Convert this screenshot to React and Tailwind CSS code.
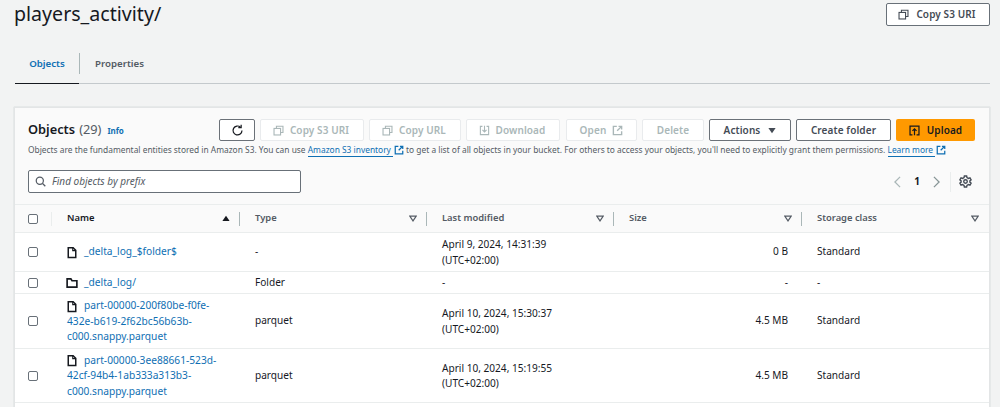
import React from "react";

function CopyIcon({ className = "" }) {
  return (
    <svg viewBox="0 0 16 16" className={"shrink-0 " + className} fill="none" stroke="currentColor" strokeWidth="1.6">
      <rect x="1.5" y="5" width="9.5" height="9.5" />
      <path d="M5 5V1.8h9.5v9.2H11" />
    </svg>
  );
}
function ExtIcon({ className = "" }) {
  return (
    <svg viewBox="0 0 16 16" className={"shrink-0 " + className} fill="none" stroke="currentColor" strokeWidth="2">
      <path d="M7 2H2v12h12V9" />
      <path d="M9.5 2H14v4.5M14 2 7.5 8.5" />
    </svg>
  );
}
function FileIcon() {
  return (
    <svg viewBox="0 0 16 16" className="w-[12px] h-[13px] shrink-0 -ml-[1px] mr-[1px] text-[#16191f]" fill="none" stroke="currentColor" strokeWidth="2">
      <path d="M3 1.5h6.5l3.5 3.5v9.5H3z" />
      <path d="M9 1.5v4h4" strokeWidth="1.5" />
    </svg>
  );
}
function FolderIcon() {
  return (
    <svg viewBox="0 0 16 16" className="w-[12px] h-[12px] shrink-0 -ml-[1px] mr-[1px] text-[#16191f]" fill="none" stroke="currentColor" strokeWidth="2.2">
      <path d="M1.5 2.5h5l1.5 2.5h6.5v8.5h-13z" />
    </svg>
  );
}
function SortDown() {
  return (
    <svg viewBox="0 0 10 8" className="w-[8px] h-[7px] shrink-0 text-[#545b64]" fill="none" stroke="currentColor" strokeWidth="1.4">
      <path d="M1 1h8L5 7z" />
    </svg>
  );
}
function Check() {
  return <span className="block w-[10px] h-[10px] rounded-[2px] border border-[#687078] bg-white" />;
}
function ToolBtn({ children, disabled, className = "" }) {
  return (
    <div
      className={
        "h-[22px] flex items-center justify-center gap-[6px] rounded-[2px] text-[10px] font-semibold tracking-[0.1px] border " +
        (disabled ? "border-[#e9ebed] bg-white text-[#aab7b8] " : "border-[#6b7178] bg-white text-[#444b55] ") +
        className
      }
    >
      {children}
    </div>
  );
}

const cols = "grid grid-cols-[37px_188px_187px_187px_188px_1fr]";

function Row({ h, name, icon, wrapped, type, date, tz, size, cls }) {
  return (
    <div className={cols + " border-b border-[#eaeded] items-center text-[10.1px] leading-[15.5px] text-[#16191f] bg-white " + h}>
      <div className="pl-[13px]"><Check /></div>
      <div className={"pl-[15px] pr-[12px] text-[10.2px] text-[#0f6fb3] " + (wrapped ? "pt-[1px]" : "")}>
        {wrapped ? (
          <>
            <div className="flex items-center gap-[5px] h-[15.5px]">{icon}<span className="whitespace-nowrap">{name[0]}</span></div>
            <div className="whitespace-nowrap">{name[1]}</div>
            <div className="whitespace-nowrap">{name[2]}</div>
          </>
        ) : (
          <div className="flex items-center gap-[5px]">{icon}<span>{name[0]}</span></div>
        )}
      </div>
      <div className="pl-[15px]">{type}</div>
      <div className={"pl-[15px] " + (tz ? "pt-[1px]" : "")}>
        <div>{date}</div>
        {tz && <div>(UTC+02:00)</div>}
      </div>
      <div className="pr-[14px] text-right">{size}</div>
      <div className="pl-[15px]">{cls}</div>
    </div>
  );
}

function Head({ label, sep = true, children }) {
  return (
    <div className="relative h-full flex items-center justify-between pl-[15px] pr-[10px] font-semibold text-[#545b64]">
      <span>{label}</span>
      {children || <SortDown />}
      {sep && <span className="absolute right-0 top-[7px] h-[14px] w-[1px] bg-[#aab7b8]" />}
    </div>
  );
}

export default function App() {
  return (
    <div className="w-[1000px] h-[407px] overflow-hidden bg-[#f2f3f3] font-['Noto_Sans','Open_Sans',sans-serif]">
      <div className="flex items-start justify-between pl-[14px] pr-[10px] pt-[3px] h-[49px]">
        <div className="text-[19.6px] leading-[22px] text-[#16191f]">players_activity/</div>
        <div className="w-[104px] h-[23px] flex items-center justify-center gap-[7px] pr-[2px] bg-white border border-[#687078] rounded-[2px] text-[10px] font-semibold tracking-[0.1px] text-[#444b55]">
          <CopyIcon className="w-[11px] h-[11px] text-[#444b55]" />
          Copy S3 URI
        </div>
      </div>

      <div className="ml-[15px] mr-[10px] h-[35px] pb-[3px] flex items-center border-b border-[#c4c9cc] relative">
        <div className="w-[64px] h-full relative flex items-center justify-center text-[9.7px] font-semibold text-[#0f6fb3]">
          Objects
          <span className="absolute left-0 right-0 bottom-[-4px] h-[1px] bg-[#16191f]" />
        </div>
        <div className="w-[1px] h-[21px] mb-[3px] bg-[#aab7b8]" />
        <div className="ml-[15px] text-[9.7px] font-semibold text-[#545b64]">Properties</div>
      </div>

      <div className="ml-[14px] mr-[10px] mt-[23px] border-l border-r border-t border-[#e3e5e6] bg-[#fafafa] h-[400px] shadow-[0_0_1px_#aab7b8]">
        <div className="h-[96px] relative pl-[13px] pr-[14px] pt-[11px]">
          <div className="flex items-center h-[22px]">
            <div className="text-[12.8px] font-semibold text-[#16191f] leading-[20px] mb-[2px]">Objects</div>
            <div className="ml-[4px] text-[12.8px] text-[#545b64] leading-[20px] mb-[2px]">(29)</div>
            <div className="ml-[6px] mt-[2px] text-[8px] font-bold text-[#0f6fb3]">Info</div>
            <div className="ml-auto flex gap-[5px]">
              <ToolBtn className="w-[36px]">
                <svg viewBox="0 0 16 16" className="w-[13px] h-[13px] text-[#16191f]" fill="none" stroke="currentColor" strokeWidth="1.5">
                  <path d="M13.5 8a5.5 5.5 0 1 1-1.8-4.1" />
                  <path d="M12.5 0.8v3.6H9" />
                </svg>
              </ToolBtn>
              <ToolBtn disabled className="w-[104px] pr-[2px]"><CopyIcon className="w-[11px] h-[11px]" />Copy S3 URI</ToolBtn>
              <ToolBtn disabled className="w-[92px] pr-[2px]"><CopyIcon className="w-[11px] h-[11px]" />Copy URL</ToolBtn>
              <ToolBtn disabled className="w-[94px] pr-[2px]">
                <svg viewBox="0 0 16 16" className="w-[11px] h-[11px]" fill="none" stroke="currentColor" strokeWidth="1.6">
                  <path d="M5 2H2v12h12V2h-3M8 1v9M5 7l3 3 3-3" />
                </svg>
                Download
              </ToolBtn>
              <ToolBtn disabled className="w-[71px] ml-[1px]">Open<ExtIcon className="w-[11px] h-[11px]" /></ToolBtn>
              <ToolBtn disabled className="w-[62px]">Delete</ToolBtn>
              <ToolBtn className="w-[82px] gap-[8px]">
                Actions
                <svg viewBox="0 0 10 8" className="w-[8px] h-[7px] text-[#444b55]" fill="currentColor"><path d="M0.5 1h9L5 7.5z" /></svg>
              </ToolBtn>
              <ToolBtn className="w-[95px]">Create folder</ToolBtn>
              <div className="w-[79px] h-[22px] flex items-center justify-center gap-[7px] bg-[#ff9900] rounded-[2px] text-[10px] font-semibold tracking-[0.1px] text-[#16191f]">
                <svg viewBox="0 0 16 16" className="w-[11px] h-[11px]" fill="none" stroke="currentColor" strokeWidth="1.8">
                  <path d="M5 14.5H1.5v-13h13v13H11M8 15V6M5 8.5l3-3 3 3" />
                </svg>
                Upload
              </div>
            </div>
          </div>
          <div className="mt-[2px] text-[8.4px] leading-[14px] text-[#545b64] whitespace-nowrap flex items-center">
            Objects are the fundamental entities stored in Amazon S3. You can use&nbsp;
            <span className="text-[#0f6fb3] border-b border-[#0f6fb3] leading-[12px] pr-[2px]">Amazon S3 inventory</span>
            <ExtIcon className="w-[10px] h-[10px] text-[#0f6fb3] ml-[1px]" />
            &nbsp;to get a list of all objects in your bucket. For others to access your objects, you'll need to explicitly grant them permissions.&nbsp;
            <span className="text-[#0f6fb3] border-b border-[#0f6fb3] leading-[12px] pr-[2px]">Learn more</span>
            <ExtIcon className="w-[10px] h-[10px] text-[#0f6fb3] ml-[1px]" />
          </div>
          <div className="mt-[13px] flex items-center">
            <div className="w-[273px] h-[23px] bg-white border border-[#687078] rounded-[2px] flex items-center pl-[6px] gap-[6px]">
              <svg viewBox="0 0 16 16" className="w-[11px] h-[11px] text-[#545b64]" fill="none" stroke="currentColor" strokeWidth="1.8">
                <circle cx="7" cy="7" r="5.2" />
                <path d="M11 11l4 4" />
              </svg>
              <span className="text-[10px] italic text-[#545b64]">Find objects by prefix</span>
            </div>
            <div className="ml-auto flex items-center h-[23px] pr-[3px] text-[#16191f]">
              <svg viewBox="0 0 8 14" className="w-[7px] h-[12px] text-[#aab7b8]" fill="none" stroke="currentColor" strokeWidth="1.5"><path d="M7 1 1 7l6 6" /></svg>
              <span className="mx-[13px] text-[10px] font-bold">1</span>
              <svg viewBox="0 0 8 14" className="w-[7px] h-[12px] text-[#879596]" fill="none" stroke="currentColor" strokeWidth="1.5"><path d="M1 1l6 6-6 6" /></svg>
              <span className="ml-[10px] w-[1px] h-[20px] bg-[#eaeded]" />
              <svg viewBox="0 0 16 16" className="ml-[8px] w-[13px] h-[13px] text-[#444b55]" fill="none" stroke="currentColor" strokeWidth="1.7">
                <circle cx="8" cy="8" r="2.2" />
                <path d="M6.6 1.2h2.8l.4 2 1.8 1 1.9-.7 1.4 2.5-1.5 1.3v1.4l1.5 1.3-1.4 2.5-1.9-.7-1.8 1-.4 2H6.6l-.4-2-1.8-1-1.9.7-1.4-2.5L2.6 8.7V7.3L1.1 6l1.4-2.5 1.9.7 1.8-1z" />
              </svg>
            </div>
          </div>
        </div>

        <div className={cols + " h-[29px] border-t border-b border-[#eaeded] items-center text-[9.4px] bg-[#fafafa]"}>
          <div className="relative h-full flex items-center pl-[13px]">
            <Check />
            <span className="absolute right-0 top-[7px] h-[14px] w-[1px] bg-[#eaeded]" />
          </div>
          <Head label={<span className="text-[#16191f]">Name</span>}>
            <svg viewBox="0 0 10 8" className="w-[8px] h-[7px] text-[#16191f]" fill="currentColor"><path d="M5 .5 9.5 7H.5z" /></svg>
          </Head>
          <Head label="Type" />
          <Head label="Last modified" />
          <Head label="Size" />
          <Head label="Storage class" sep={false} />
        </div>

        <Row h="h-[39px]" icon={<FileIcon />} name={["_delta_log_$folder$"]} type="-" date="April 9, 2024, 14:31:39" tz size="0 B" cls="Standard" />
        <Row h="h-[22px]" icon={<FolderIcon />} name={["_delta_log/"]} type="Folder" date="-" size="-" cls="-" />
        <Row h="h-[55px]" wrapped icon={<FileIcon />} name={["part-00000-200f80be-f0fe-", "432e-b619-2f62bc56b63b-", "c000.snappy.parquet"]} type="parquet" date="April 10, 2024, 15:30:37" tz size="4.5 MB" cls="Standard" />
        <Row h="h-[54px]" wrapped icon={<FileIcon />} name={["part-00000-3ee88661-523d-", "42cf-94b4-1ab333a313b3-", "c000.snappy.parquet"]} type="parquet" date="April 10, 2024, 15:19:55" tz size="4.5 MB" cls="Standard" />
        <div className="h-[20px] bg-white" />
      </div>
    </div>
  );
}
